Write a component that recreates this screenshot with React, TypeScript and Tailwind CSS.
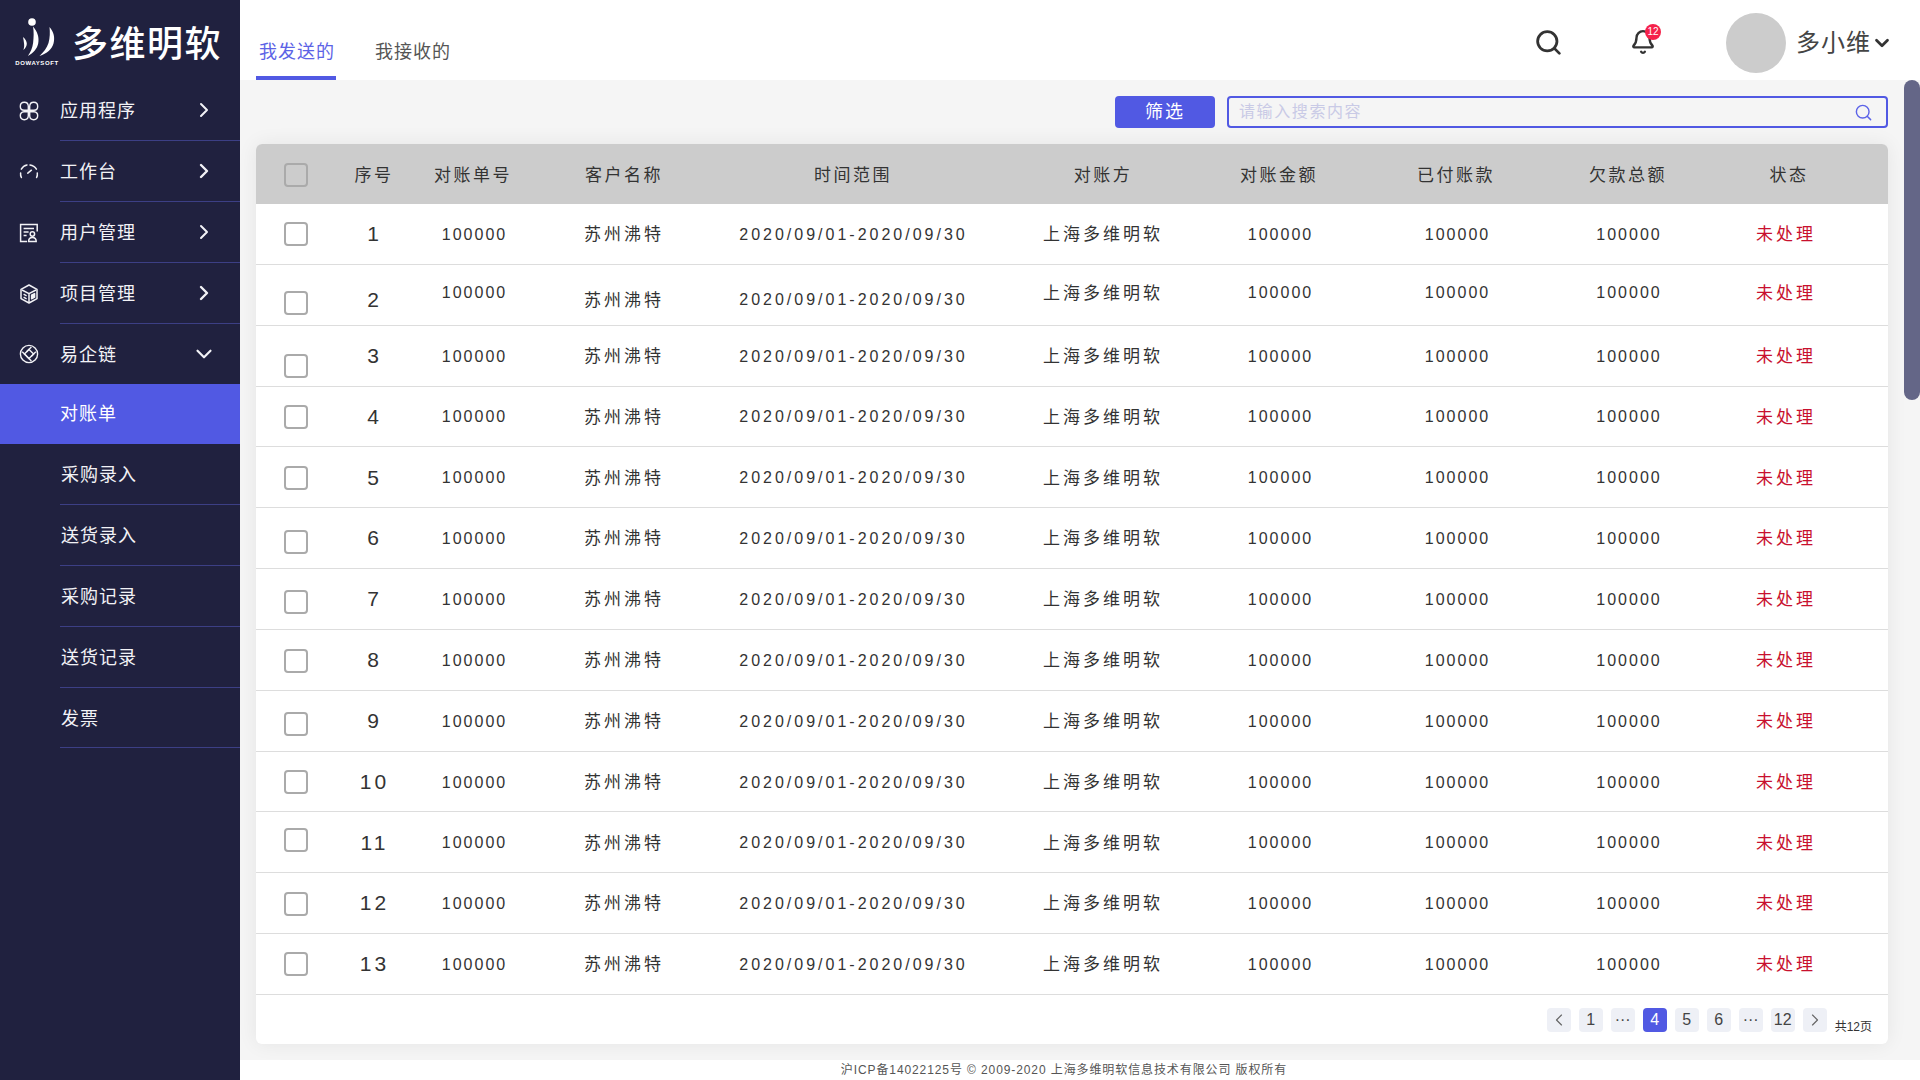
import React from 'react';
import { Search, ChevronRight, ChevronLeft, ChevronDown, Bell } from 'lucide-react';

// Shared font stack
const FONT = "font-['Liberation_Sans','Noto_Sans_CJK_SC',sans-serif]";

function AppsIcon() {
  return (
    <svg viewBox="0 0 20 20" className="h-[20px] w-[20px]" fill="none" stroke="currentColor" strokeWidth="1.4">
      <path d="M9.300 9.300H5a4 4 0 1 1 4.300-4.300v4.300Z" />
      <path d="M10.700 9.300H15a4 4 0 1 0-4.300-4.300v4.300Z" />
      <path d="M9.300 10.700H5a4 4 0 1 0 4.300 4.300v-4.300Z" />
      <path d="M10.700 10.700H15a4 4 0 1 1-4.300 4.300v-4.300Z" />
    </svg>
  );
}

function GaugeIcon() {
  return (
    <svg viewBox="0 0 20 20" className="h-[20px] w-[20px]" fill="none" stroke="currentColor" strokeWidth="1.5" strokeLinecap="round">
      <path d="M2.400 15.500A8 8 0 0 1 1.600 11" />
      <path d="M2.300 7.200A8.400 8.400 0 0 1 8 3" />
      <path d="M11 3a8.400 8.400 0 0 1 6.400 4.200" />
      <path d="M18.300 11a8 8 0 0 1-.7 4.500" />
      <path d="M8.800 11.200 12.400 8.200" />
    </svg>
  );
}

function UserDocIcon() {
  return (
    <svg viewBox="0 0 20 20" className="h-[20px] w-[20px]" fill="none" stroke="currentColor" strokeWidth="1.5">
      <path d="M8 18.600H1.600V1.600h16.600v7" />
      <path d="M4.600 5.600h10.400M4.600 9h5M4.600 12.400h3" />
      <circle cx="13.400" cy="11" r="2.200" />
      <path d="M9.600 18.600c0-2.600 1.600-4 3.800-4s3.800 1.400 3.800 4h-7.600Z" />
    </svg>
  );
}

function CubeIcon() {
  return (
    <svg viewBox="0 0 20 20" className="h-[20px] w-[20px]" fill="none" stroke="currentColor" strokeWidth="1.5" strokeLinejoin="round">
      <path d="M10 1 18 5.400v9.200L10 19l-8-4.400V5.400L10 1Z" />
      <path d="M3 6l7 3.600L17 6M10 9.600V18" />
      <path d="M4.600 10.200 7.600 11.800M4.600 13.200 7.600 14.800" />
      <path d="M12.600 11.200 15.600 9.600v3.600l-3 1.600v-3.600Z" fill="currentColor" />
    </svg>
  );
}

function ChainIcon() {
  return (
    <svg viewBox="0 0 20 20" className="h-[20px] w-[20px]" fill="none" stroke="currentColor" strokeWidth="1.400">
      <circle cx="10" cy="10" r="8.600" />
      <path d="M10 5.400 14.600 10 10 14.600 5.400 10 10 5.400Z" />
      <path d="M12.400 3 7.600 7.800M12.200 12.400 16.800 7.800M7.800 12.200 3.200 7.800M7.600 12.200l4.800 4.800" />
    </svg>
  );
}

function Logo() {
  return (
    <div className="flex w-[38px] shrink-0 flex-col items-center">
      <svg viewBox="0 0 38 44" className="h-[44px] w-[38px]" fill="white">
        <circle cx="14" cy="6" r="3.800" />
        <path d="M5 21c2.400 2 3.800 4.400 3.800 6.600 0 2.200-1 4.600-3.400 6.400.8-2.400 1-4.600.6-6.800-.2-2.200-.6-4.200-1-6.200Z" />
        <path d="M15 10.500c4.500 5 6.400 11 5.200 17-1 5-4.700 9.500-10.300 12.500 2.600-3.800 4.600-8 5.200-13 .6-5.600.9-11.200-.1-16.500Z" />
        <path d="M31.500 11c4.500 5 5.600 11 4 16.500-1.500 5.500-6.500 10-14 12.500 4-4 7.500-8 9-13 1.500-5.200 1.600-10.600 1-16Z" />
      </svg>
      <span className="mt-[-1px] text-[6px] font-bold leading-[8px] tracking-[0.6px] whitespace-nowrap text-white">DOWAYSOFT</span>
    </div>
  );
}

const MENU = [
  { label: '应用程序', icon: <AppsIcon />, h: 'h-[61px]' },
  { label: '工作台', icon: <GaugeIcon />, h: 'h-[61px]', bold: true },
  { label: '用户管理', icon: <UserDocIcon />, h: 'h-[61px]' },
  { label: '项目管理', icon: <CubeIcon />, h: 'h-[61px]', bold: true },
];

const SUB_MENU = [
  { label: '采购录入', h: 'h-[61px]' },
  { label: '送货录入', h: 'h-[61px]' },
  { label: '采购记录', h: 'h-[61px]' },
  { label: '送货记录', h: 'h-[61px]' },
  { label: '发票', h: 'h-[60px]' },
];

function Sidebar() {
  return (
    <aside className="flex h-full w-[240px] shrink-0 flex-col bg-[#20213f] text-[#f2f2f6]">
      <div className="flex h-[80px] items-start pl-[18px] pt-[16px]">
        <Logo />
        <span className="mt-[7px] ml-[16px] text-[36px] leading-[44px] font-medium tracking-[1.5px] whitespace-nowrap text-white">多维明软</span>
      </div>
      {MENU.map((item) => (
        <div key={item.label} className={`flex ${item.h} items-center pl-[19px]`}>
          <span className="w-[20px] shrink-0">{item.icon}</span>
          <div className="ml-[21px] flex h-full flex-1 items-center justify-between border-b border-[#3c3f85] pr-[24px]">
            <span className="pt-[2px] text-[18px] tracking-[1px]">{item.label}</span>
            <ChevronRight size={24} strokeWidth={item.bold ? 2.4 : 2} />
          </div>
        </div>
      ))}
      <div className="flex h-[60px] items-center pl-[19px]">
        <span className="w-[20px] shrink-0"><ChainIcon /></span>
        <div className="ml-[21px] flex flex-1 items-center justify-between pr-[23px]">
          <span className="pt-[2px] text-[18px] tracking-[1px]">易企链</span>
          <ChevronDown size={26} strokeWidth={2} />
        </div>
      </div>
      <div className="flex h-[60px] items-center bg-[#5159e3] pl-[60px] text-[18px] tracking-[1px] text-white">对账单</div>
      {SUB_MENU.map((item) => (
        <div key={item.label} className={`ml-[60px] flex ${item.h} items-center border-b border-[#3c3f85] pt-[3px] pl-[1px] text-[18px] tracking-[1px]`}>
          {item.label}
        </div>
      ))}
    </aside>
  );
}

function TopBar() {
  return (
    <header className="flex h-[80px] shrink-0 items-stretch bg-white pl-[16px]">
      <div className="flex w-[80px] items-end justify-center border-b-4 border-[#5159e3] pb-[11px] pl-[2px] text-[18px] leading-[26px] tracking-[1px] text-[#5c63e6]">我发送的</div>
      <div className="ml-[37px] flex w-[80px] items-end justify-center pb-[15px] text-[18px] leading-[26px] tracking-[1px] text-[#555555]">我接收的</div>
      <div className="ml-auto flex items-center pt-[6px] pr-[27px]">
        <Search size={29} strokeWidth={2.3} className="mb-[2px] text-[#333333]" />
        <div className="relative ml-[67px] mb-[2px]">
          <Bell size={26} strokeWidth={2.2} className="text-[#333333]" />
          <span className="absolute top-[-5px] right-[-5px] flex h-[16px] w-[16px] items-center justify-center rounded-full bg-[#f5224a] text-[10px] leading-none text-white">12</span>
        </div>
        <div className="ml-[70px] h-[60px] w-[60px] rounded-full bg-[#cccccc]" />
        <span className="ml-[10px] text-[24px] tracking-[1px] text-[#444444]">多小维</span>
        <ChevronDown size={22} strokeWidth={3} className="text-[#333333]" />
      </div>
    </header>
  );
}

const GRID = 'grid grid-cols-[80px_74px_124px_178px_280px_220px_132px_222px_122px_200px]';
const HEADS = ['序号', '对账单号', '客户名称', '时间范围', '对账方', '对账金额', '已付账款', '欠款总额', '状态'];

function Checkbox({ shift = '' }: { shift?: string }) {
  return <div className={`h-[24px] w-[24px] rounded-[4px] border-2 border-[#aaaaaa] ${shift}`} />;
}

// The reference's cells are not quite centred in a few rows
const ROWS = [
  { no: 1 },
  { no: 2, check: 'mt-[16px]', low: 'mt-[9px]', high: 'mb-[5px]' },
  { no: 3, check: 'mt-[21px]' },
  { no: 4, check: 'mt-[2px]' },
  { no: 5, check: 'mt-[2px]' },
  { no: 6, check: 'mt-[7px]' },
  { no: 7, check: 'mt-[7px]' },
  { no: 8, check: 'mt-[2px]' },
  { no: 9, check: 'mt-[7px]' },
  { no: 10, check: 'mt-[1px]' },
  { no: 11, check: 'mb-[4px]' },
  { no: 12, check: 'mt-[2px]' },
  { no: 13 },
];

function Row({ no, check = '', low = '', high = '' }: { no: number; check?: string; low?: string; high?: string }) {
  const cell = 'flex items-center justify-center whitespace-nowrap pt-[2px]';
  return (
    <div className={`${GRID} h-[60.85px] border-b border-[#dddddd] text-[16px] text-[#333333]`}>
      <div className="flex items-center justify-center"><Checkbox shift={check} /></div>
      <div className="flex items-center justify-center whitespace-nowrap"><span className={`text-[21px] tracking-[3px] pl-[3px] ${low}`}>{no}</span></div>
      <div className={cell}><span className={`tracking-[2px] pl-[5px] ${high}`}>100000</span></div>
      <div className={cell}><span className={`text-[17px] tracking-[3px] pl-[2px] ${low}`}>苏州沸特</span></div>
      <div className={cell}><span className={`tracking-[3px] pl-[3px] ${low}`}>2020/09/01-2020/09/30</span></div>
      <div className={cell}><span className={`text-[17px] tracking-[3px] pl-[2px] ${high}`}>上海多维明软</span></div>
      <div className={cell}><span className={`tracking-[2px] pl-[5px] ${high}`}>100000</span></div>
      <div className={cell}><span className={`tracking-[2px] pl-[5px] ${high}`}>100000</span></div>
      <div className={cell}><span className={`tracking-[2px] pl-[4px] ${high}`}>100000</span></div>
      <div className={cell}><span className={`text-[17px] tracking-[3px] pr-[4px] text-[#c8102e] ${high}`}>未处理</span></div>
    </div>
  );
}

function Pagination() {
  const pages: React.ReactNode[] = [
    <ChevronLeft key="prev" size={20} strokeWidth={1.4} className="text-[#666666]" />,
    '1', '···', '4', '5', '6', '···', '12',
    <ChevronRight key="next" size={20} strokeWidth={1.4} className="text-[#666666]" />,
  ];
  return (
    <div className="flex flex-1 items-start justify-end pt-[13px] pr-[16px]">
      {pages.map((page, i) => (
        <div
          key={i}
          className={`mr-[8px] flex h-[24px] w-[24px] items-center justify-center rounded-[4px] text-[16px] ${
            page === '4' ? 'bg-[#5159e3] text-white' : 'bg-[#eef0f6] text-[#444444]'
          }`}
        >
          {page}
        </div>
      ))}
      <span className="mt-[9px] text-[12px] leading-[20px] text-[#333333]">共12页</span>
    </div>
  );
}

export default function App() {
  return (
    <div className={`${FONT} flex h-screen w-full overflow-hidden bg-white`}>
      <Sidebar />
      <div className="flex min-w-0 flex-1 flex-col">
        <TopBar />
        <div className="flex min-h-0 flex-1 bg-[#f5f5f5]">
          <main className="flex min-w-0 flex-1 flex-col pt-[16px] pb-[16px] pl-[16px]">
            <div className="flex h-[32px] shrink-0 items-stretch justify-end">
              <button className="w-[100px] rounded-[4px] bg-[#5159e3] text-[18px] tracking-[2px] text-white">筛选</button>
              <div className="ml-[12px] flex w-[661px] items-center justify-between rounded-[4px] border-2 border-[#5159e3] pr-[13px] pl-[10px]">
                <span className="text-[16px] tracking-[1.6px] text-[#c9cae6]">请输入搜索内容</span>
                <Search size={19} strokeWidth={1.8} className="text-[#5c63e8]" />
              </div>
            </div>
            <section className="mt-[16px] flex min-h-0 flex-1 flex-col overflow-hidden rounded-[6px] bg-white shadow-[0_0_20px_rgba(0,0,0,0.07)]">
              <div className={`${GRID} h-[60px] shrink-0 bg-[#cccccc] text-[17px] text-[#333333]`}>
                <div className="flex items-center justify-center"><Checkbox shift="mt-[2px]" /></div>
                {HEADS.map((head) => (
                  <div key={head} className="flex items-center justify-center pt-[3px] pl-[2px] tracking-[2.5px] whitespace-nowrap">{head}</div>
                ))}
              </div>
              {ROWS.map((row) => <Row key={row.no} {...row} />)}
              <Pagination />
            </section>
          </main>
          <div className="ml-[16px] w-[16px] shrink-0">
            <div className="h-[320px] rounded-full bg-[#646687]" />
          </div>
        </div>
        <footer className="flex h-[20px] shrink-0 items-center justify-center bg-white pr-[32px] text-[12px] tracking-[0.9px] text-[#555555]">
          沪ICP备14022125号 © 2009-2020 上海多维明软信息技术有限公司 版权所有
        </footer>
      </div>
    </div>
  );
}
